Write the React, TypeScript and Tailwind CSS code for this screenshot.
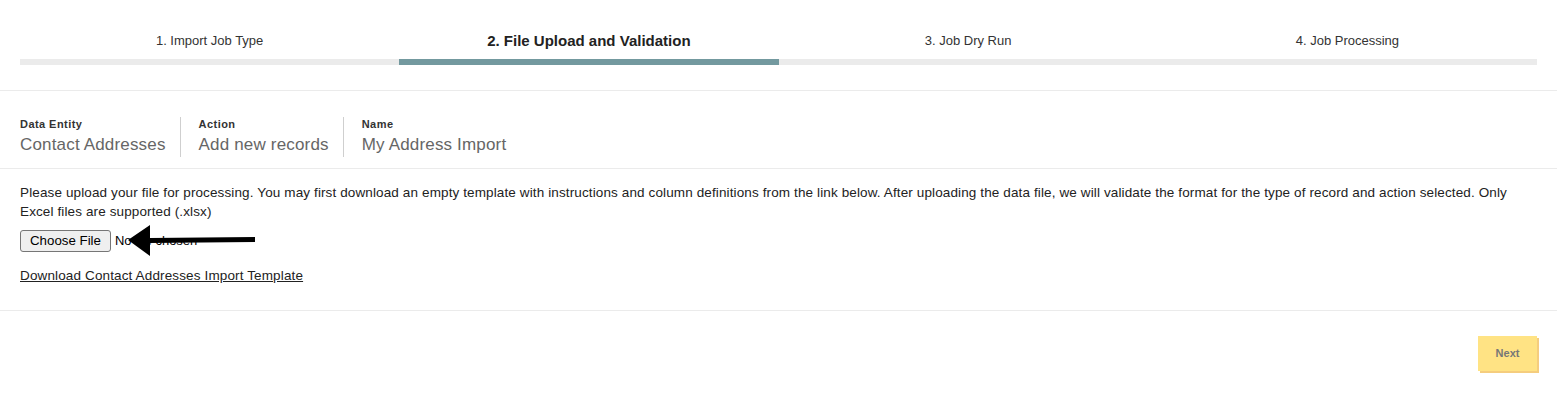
import { useState } from 'react'

const steps = ['1. Import Job Type', '2. File Upload and Validation', '3. Job Dry Run', '4. Job Processing']

const details = [
  { label: 'Data Entity', value: 'Contact Addresses' },
  { label: 'Action', value: 'Add new records' },
  { label: 'Name', value: 'My Address Import' },
]

export default function App() {
  const active = 1
  const [fileName] = useState<string | null>(null)

  return (
    <div className="w-[1557px] h-[394px] bg-white text-[#222] font-['Liberation_Sans','Arial',sans-serif] relative">
      {/* wizard steps */}
      <div className="px-5 pt-[31px] pb-[25px] border-b border-[#ebebeb]">
        <div className="grid grid-cols-4">
          {steps.map((s, i) => (
            <div key={s} className="flex flex-col items-center">
              <div
                className={
                  i === active
                    ? 'h-[20px] leading-[20px] text-[15px] font-bold text-[#222]'
                    : 'h-[20px] leading-[20px] text-[13px] text-[#333]'
                }
              >
                {s}
              </div>
              <div className={i === active ? 'mt-[8px] h-[6px] w-full bg-[#73999f]' : 'mt-[8px] h-[6px] w-full bg-[#ebebeb]'} />
            </div>
          ))}
        </div>
      </div>

      {/* job details */}
      <div className="flex px-5 pt-[26px] pb-[11px] border-b border-[#ebebeb]">
        {details.map((d, i) => (
          <div
            key={d.label}
            className={
              i === 0
                ? 'pr-[14px] border-r border-[#cfcfcf]'
                : i === details.length - 1
                  ? 'pl-[18px]'
                  : 'pl-[18px] pr-[14px] border-r border-[#cfcfcf]'
            }
          >
            <div className="text-[11px] leading-[14px] font-bold tracking-[0.04em] text-[#333]">{d.label}</div>
            <div className="text-[17px] leading-[24px] text-[#666] mt-[2px] tracking-[0.01em]">{d.value}</div>
          </div>
        ))}
      </div>

      {/* upload */}
      <div className="px-5 pt-[14px] pb-[25px] border-b border-[#ebebeb]">
        <p className="text-[13.5px] leading-[19px] tracking-[0.009em] text-[#222]">
          Please upload your file for processing. You may first download an empty template with instructions and column definitions from the link below. After uploading the data file, we will validate the format for the type of record and action selected. Only Excel files are supported (.xlsx)
        </p>
        <div className="flex items-center mt-[9px] text-[13px]">
          <button className="h-[22px] px-[9px] border border-[#767676] rounded-[3px] bg-[#efefef] text-[13.3px] text-black leading-none">
            Choose File
          </button>
          <span className="ml-[4px] text-black">{fileName ?? 'No file chosen'}</span>
        </div>
        <a href="#" className="block mt-[15px] text-[13.5px] leading-[18px] tracking-[0.01em] text-[#222] underline">
          Download Contact Addresses Import Template
        </a>
      </div>

      {/* footer */}
      <div className="flex justify-end px-5 pt-[25px]">
        <button className="w-[59px] h-[35px] bg-[#ffe384] shadow-[2px_2px_0_#f5cd7e] text-[11px] font-bold text-[#777]">
          Next
        </button>
      </div>

      {/* annotation arrow */}
      <svg className="absolute left-[120px] top-[222px]" width="140" height="36" viewBox="0 0 140 36">
        <polygon points="8,18 30,3 30,16 135,15 135,20 30,21 30,34" fill="#000" />
      </svg>
    </div>
  )
}
